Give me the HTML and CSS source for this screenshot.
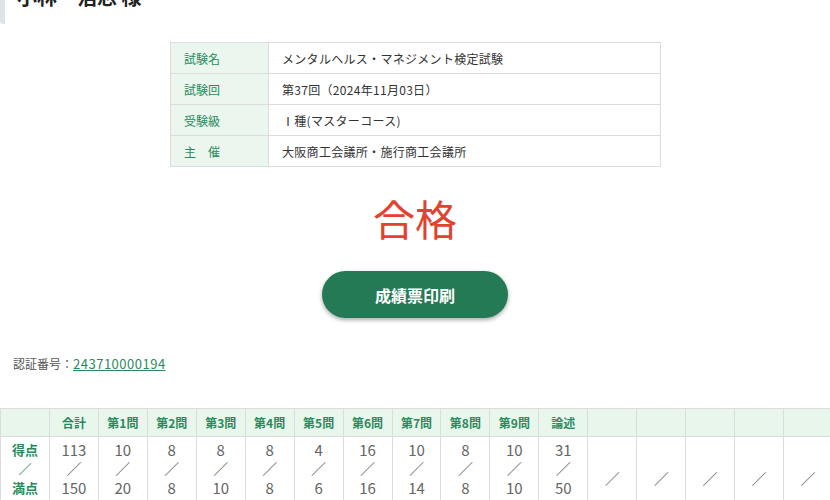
FILE: index.html
```html
<!DOCTYPE html>
<html lang="ja">

<head>
    <meta charset="UTF-8">
    <meta name="viewport" content="width=device-width, initial-scale=1.0">
    <title>合否結果</title>
    <link rel="stylesheet" href="styles.css">
</head>

<body>
    <div class="page">
        <h2 class="name">小林　浩志 様</h2>

        <table class="info">
            <tr>
                <th>試験名</th>
                <td>メンタルヘルス・マネジメント検定試験</td>
            </tr>
            <tr>
                <th>試験回</th>
                <td>第37回（2024年11月03日）</td>
            </tr>
            <tr>
                <th>受験級</th>
                <td>Ⅰ種(マスターコース)</td>
            </tr>
            <tr>
                <th>主　催</th>
                <td>大阪商工会議所・施行商工会議所</td>
            </tr>
        </table>

        <p class="result">合格</p>

        <div class="print">
            <button class="print-button">成績票印刷</button>
        </div>

        <p class="cert">認証番号：<a href="#">243710000194</a></p>

        <div class="score-wrap">
            <table class="score">
                <tr>
                    <th></th>
                    <th>合計</th>
                    <th>第1問</th>
                    <th>第2問</th>
                    <th>第3問</th>
                    <th>第4問</th>
                    <th>第5問</th>
                    <th>第6問</th>
                    <th>第7問</th>
                    <th>第8問</th>
                    <th>第9問</th>
                    <th>論述</th>
                    <th></th>
                    <th></th>
                    <th></th>
                    <th></th>
                    <th></th>
                </tr>
                <tr>
                    <th class="row-label">得点<br>／<br>満点</th>
                    <td>113<br>／<br>150</td>
                    <td>10<br>／<br>20</td>
                    <td>8<br>／<br>8</td>
                    <td>8<br>／<br>10</td>
                    <td>8<br>／<br>8</td>
                    <td>4<br>／<br>6</td>
                    <td>16<br>／<br>16</td>
                    <td>10<br>／<br>14</td>
                    <td>8<br>／<br>8</td>
                    <td>10<br>／<br>10</td>
                    <td>31<br>／<br>50</td>
                    <td class="empty">／</td>
                    <td class="empty">／</td>
                    <td class="empty">／</td>
                    <td class="empty">／</td>
                    <td class="empty">／</td>
                </tr>
            </table>
        </div>
    </div>
</body>

</html>
```

FILE: styles.css
```css
body {
    margin: 0;
    overflow: hidden;
    background-color: #ffffff;
    font-family: "Noto Sans CJK JP", "Noto Sans", sans-serif;
    color: #333333;
}

.name {
    margin: -24px 0 0 0;
    height: 48px;
    line-height: 42px;
    padding-left: 12px;
    border-left: 5px solid #e1e3ea;
    border-bottom-left-radius: 3px;
    font-size: 20px;
    font-weight: bold;
    color: #222222;
    box-sizing: border-box;
}

.info {
    margin: 18px auto 0 170px;
    width: 491px;
    border-collapse: collapse;
    font-size: 12px;
}

.info th,
.info td {
    border: 1px solid #dcdcdc;
    height: 30px;
    padding: 0 13px;
    text-align: left;
}

.info th {
    width: 71px;
    background-color: #eaf6ee;
    color: #2b8a5c;
    font-weight: normal;
}

.info td {
    color: #333333;
    letter-spacing: 0.3px;
}

.result {
    margin: 21px 0 0 0;
    text-align: center;
    font-size: 42px;
    line-height: 60px;
    color: #e1432f;
}

.print {
    display: flex;
    justify-content: center;
    margin-top: 23px;
}

.print-button {
    width: 186px;
    height: 47px;
    border: none;
    border-radius: 24px;
    background-color: #237a55;
    color: white;
    font-family: inherit;
    font-size: 16px;
    font-weight: bold;
    box-shadow: 0 2px 4px rgba(0, 0, 0, 0.35);
    cursor: pointer;
}

.cert {
    margin: 37px 0 0 13px;
    font-size: 12px;
    line-height: 18px;
    color: #555555;
}

.cert a {
    color: #2b8a5c;
    font-size: 13px;
    letter-spacing: 0.5px;
}

.score-wrap {
    margin-top: 35px;
    width: 830px;
    overflow: hidden;
}

.score {
    table-layout: fixed;
    width: 833px;
    border-collapse: collapse;
    font-size: 12px;
}

.score th,
.score td {
    border: 1px solid #dcdcdc;
    text-align: center;
    padding: 0;
}

.score tr:first-child th {
    height: 27px;
    background-color: #e8f6ec;
    color: #2b8a5c;
}

.score .row-label {
    color: #2b8a5c;
    background-color: #ffffff;
    font-size: 13px;
}

.score td,
.score .row-label {
    height: 66px;
    line-height: 19px;
    padding-top: 3px;
    vertical-align: top;
}

.score td {
    color: #666666;
    font-size: 15px;
}

.score td.empty {
    vertical-align: middle;
    padding-top: 8px;
}
```
